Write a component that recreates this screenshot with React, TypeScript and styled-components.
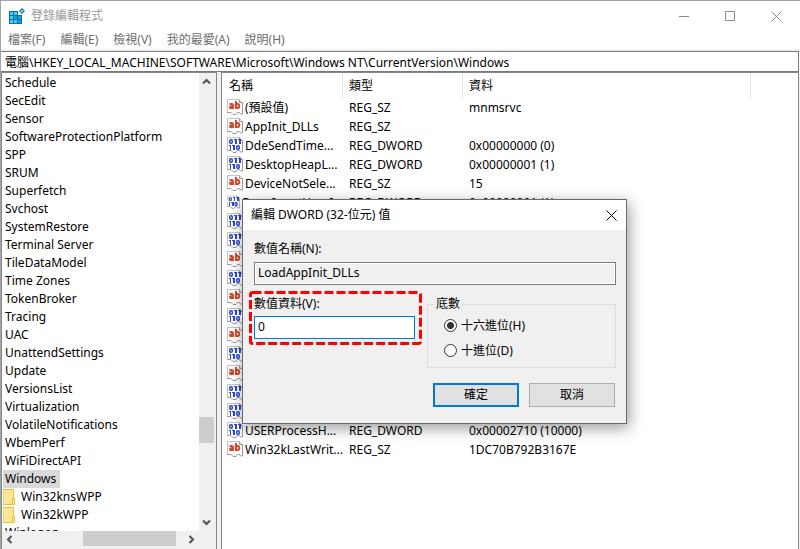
import React from "react";
import styled, { createGlobalStyle, css } from "styled-components";

const Global = createGlobalStyle`
  * { box-sizing: border-box; }
  html, body, #root { height: 100%; }
  body { margin: 0; overflow: hidden; background: #fff; }
  body, button, input, table {
    font-family: "Noto Sans", "Noto Sans CJK TC", sans-serif;
    font-size: 12px;
    line-height: 18px;
    color: #000;
  }
  button, input { padding: 0; margin: 0; }
`;

const Window = styled.div`
  position: relative;
  height: 100vh;
  display: flex;
  flex-direction: column;
  overflow: hidden;
  background: #fff;
  border-top: 1px solid #a4a4a4;
  border-left: 1px solid #a4a4a4;
`;

const TitleBar = styled.header`
  display: flex;
  align-items: center;
  flex: none;
  height: 30px;
  padding: 0 1px 0 8px;
  color: #999;
`;

const Title = styled.h1`
  flex: 1;
  margin: 0 0 0 5px;
  font-size: 12px;
  font-weight: 400;
`;

const WindowButton = styled.button`
  display: flex;
  align-items: center;
  justify-content: center;
  width: 46px;
  height: 28px;
  border: 0;
  background: none;
  color: #8c8c8c;
`;

const MenuBar = styled.nav`
  display: flex;
  flex: none;
  height: 20px;
  padding: 0 7px;
  gap: 15px;
  border-bottom: 2px solid #f0f0f0;
`;

const MenuItem = styled.button`
  border: 0;
  background: none;
  color: #6d6d6d;
`;

const Address = styled.input`
  flex: none;
  width: calc(100% - 1px);
  height: 21px;
  padding: 0 4px;
  border: 1px solid #7a7a7a;
  border-left: 0;
  outline: 0;
`;

const Panes = styled.main`
  display: flex;
  flex: 1;
  min-height: 0;
  background: #f0f0f0;
`;

const TreePane = styled.section`
  display: grid;
  grid-template: minmax(0, 1fr) 18px / minmax(0, 1fr) 17px;
  flex: none;
  width: 216px;
  border: 1px solid #828790;
  border-bottom: 0;
  background: #fff;
`;

const Tree = styled.ul`
  margin: 0;
  padding: 1px 0 0 1px;
  list-style: none;
  overflow: hidden;
`;

const TreeRow = styled.li`
  display: flex;
  align-items: center;
  height: 18px;
`;

const TreeLabel = styled.span<{ $selected?: boolean }>`
  padding: 0 4px 0 2px;
  white-space: nowrap;
  background: ${(p) => (p.$selected ? "#d9d9d9" : "none")};
`;

const Folder = styled.svg`
  margin-right: 4px;
`;

const ScrollBar = styled.div<{ $horizontal?: boolean }>`
  display: flex;
  flex-direction: ${(p) => (p.$horizontal ? "row" : "column")};
  background: #f0f0f0;
`;

const ScrollButton = styled.button`
  display: flex;
  align-items: center;
  justify-content: center;
  flex: none;
  width: 15px;
  height: 17px;
  border: 0;
  background: none;
`;

const Track = styled.div<{ $before: number; $thumb: number; $after: number; $horizontal?: boolean }>`
  flex: 1;
  display: grid;
  ${(p) => {
    const tracks = `${p.$before}fr ${p.$thumb}fr ${p.$after}fr`;
    return p.$horizontal
      ? css`grid-template-columns: ${tracks};`
      : css`grid-template-rows: ${tracks};`;
  }}
`;

const Thumb = styled.div<{ $horizontal?: boolean }>`
  background: #cdcdcd;
  ${(p) => (p.$horizontal ? "grid-column: 2; height: 15px;" : "grid-row: 2; width: 15px;")}
`;

const ListPane = styled.section`
  flex: 1;
  min-width: 0;
  margin-left: 4px;
  border: 1px solid #828790;
  border-bottom: 0;
  margin-right: 1px;
  background: #fff;
  overflow: hidden;
`;

const Values = styled.table`
  width: 100%;
  table-layout: fixed;
  border-collapse: separate;
  border-spacing: 0;
`;

const HeadCell = styled.th<{ $width?: number }>`
  height: 25px;
  width: ${(p) => (p.$width ? `${p.$width}px` : "auto")};
  padding: 1px 0 0 6px;
  text-align: left;
  font-weight: 400;
  background: linear-gradient(#e5e5e5, #e5e5e5) right top / ${(p) => (p.$width ? 1 : 0)}px 25px no-repeat;
  &:first-child { padding-left: 7px; }
`;

const Cell = styled.td`
  height: 19px;
  padding: 0 0 0 6px;
  white-space: nowrap;
`;

const NameCell = styled(Cell)`
  padding-left: 5px;
`;

const NameContent = styled.div`
  display: flex;
  align-items: center;
  gap: 2px;
  height: 19px;
`;

const Dialog = styled.section`
  position: absolute;
  left: 241px;
  top: 198px;
  width: 385px;
  background: #f0f0f0;
  border: 1px solid #6a6a6a;
  box-shadow: 2px 4px 14px rgba(0, 0, 0, 0.4);
`;

const DialogBar = styled.header`
  display: flex;
  align-items: center;
  justify-content: space-between;
  height: 30px;
  padding-left: 8px;
  background: #fff;
`;

const DialogTitle = styled.h2`
  margin: 0;
  font-size: 12px;
  font-weight: 400;
`;

const CloseButton = styled(WindowButton)`
  width: 30px;
  color: #000;
`;

const DialogBody = styled.form`
  padding: 10px 10px 16px 11px;
`;

const Label = styled.label`
  display: block;
`;

const NameInput = styled.input`
  display: block;
  width: 100%;
  height: 23px;
  margin: 4px 0 7px;
  padding: 0 3px 2px;
  border: 1px solid #7a7a7a;
  background: #f0f0f0;
  outline: 1px solid #fff;
  outline-offset: -2px;
`;

const Columns = styled.div`
  display: grid;
  grid-template-columns: minmax(0, 1fr) 189px;
  gap: 12px;
`;

const DataField = styled.div`
  position: relative;
  padding-top: 3px;
`;

const DataInput = styled.input`
  display: block;
  width: 100%;
  height: 23px;
  margin-top: 3px;
  padding: 0 3px 2px;
  border: 1px solid #0078d7;
  background: #fff;
  outline: 0;
`;

const Highlight = styled.svg`
  position: absolute;
  left: -6px;
  top: -2px;
  width: 175px;
  height: 56px;
  pointer-events: none;
`;

const Base = styled.fieldset`
  height: 73px;
  margin: 3px 0 0;
  padding: 0 0 0 16px;
  border: 1px solid #dcdcdc;
`;

const Legend = styled.legend`
  margin-left: -10px;
  padding: 0 2px;
`;

const Option = styled.label`
  display: flex;
  align-items: center;
  gap: 4px;
  height: 25px;
`;

const Radio = styled.input`
  appearance: none;
  width: 13px;
  height: 13px;
  border: 1px solid #333;
  border-radius: 50%;
  background: #fff;
  &:checked {
    background: radial-gradient(circle, #333 0 3px, #fff 4px);
  }
`;

const Actions = styled.div`
  display: flex;
  justify-content: flex-end;
  gap: 10px;
  margin-top: 15px;
  padding-right: 1px;
`;

const Action = styled.button<{ $primary?: boolean }>`
  width: 86px;
  height: 24px;
  border: ${(p) => (p.$primary ? "2px solid #0078d7" : "1px solid #adadad")};
  background: #e1e1e1;
`;

const AppIcon = () => (
  <svg width="17" height="16" viewBox="0 0 17 16" aria-hidden="true">
    <path d="M0 3h9v4h4v9H0z" fill="#0b72a3" />
    <path d="M1 4h3v3H1zM5 4h3v3H5zM1 8h3v3H1zM5 12h3v3H5zM1 12h3v3H1z" fill="#45cdfa" />
    <path d="M5 8h3v3H5zM9 8h3v3H9zM9 12h3v3H9z" fill="#149fe0" />
    <path d="M13 0l3 3-3 3-3-3z" fill="#0b7db0" />
    <path d="M13 1.500l1.500 1.500-1.500 1.500-1.500-1.500z" fill="#7fdcff" />
  </svg>
);

const Page = () => (
  <>
    <path d="M.5 14V.5H12.500L15.500 3.500V14" fill="#fff" stroke="#c4c4c4" />
    <path d="M.5 13.500H4l2 2h3l1.500-2h2l1 1.500h2V3.500h-3V.5" fill="none" stroke="#999" />
  </>
);

const StringIcon = () => (
  <svg width="16" height="17" viewBox="0 0 16 17" aria-hidden="true">
    <Page />
    <g fill="none" stroke="#d6492a" strokeWidth="2">
      <path d="M2.500 5h2q1.500 0 1.500 1.400V10M6 7.300H4.200Q3 7.300 3 8.300T4.200 9.200Q5.500 9.200 6 8.500" />
      <path d="M9 2v8M9 6q.6-.9 1.600-.9 1.700 0 1.700 2t-1.700 2q-1 0-1.600-.8" />
    </g>
  </svg>
);

const BinaryIcon = () => (
  <svg width="16" height="17" viewBox="0 0 16 17" aria-hidden="true">
    <Page />
    <g fill="none" stroke="#2a48d0" strokeWidth="1.500">
      <rect x="2.750" y="2.750" width="2.500" height="3.500" rx="1" />
      <rect x="9.750" y="8.750" width="2.500" height="3.500" rx="1" />
    </g>
    <g fill="#2a48d0" shapeRendering="crispEdges">
      <path d="M7 2h3v5H8V3H7zM11 2h3v5h-2V3h-1z" />
      <path d="M2 8h2v5H3V9H2zM3 9h1v4H3zM5 8h3v5H6V9H5z" />
    </g>
  </svg>
);

const Cross = () => (
  <svg width="11" height="11" viewBox="0 0 11 11" aria-hidden="true">
    <path d="M.5.5l10 10M10.500.5l-10 10" stroke="currentColor" />
  </svg>
);

const arrows = {
  up: "M1 6.500L4.500 3 8 6.500",
  down: "M1 2.500L4.500 6 8 2.500",
  left: "M6.500 1L3 4.500 6.500 8",
  right: "M2.500 1L6 4.500 2.500 8",
};

const Arrow = ({ to }: { to: keyof typeof arrows }) => (
  <svg width="9" height="9" viewBox="0 0 9 9" aria-hidden="true">
    <path d={arrows[to]} fill="none" stroke="#505050" strokeWidth="2" />
  </svg>
);

const keys = [
  "Schedule", "SecEdit", "Sensor", "SoftwareProtectionPlatform", "SPP", "SRUM", "Superfetch",
  "Svchost", "SystemRestore", "Terminal Server", "TileDataModel", "Time Zones", "TokenBroker",
  "Tracing", "UAC", "UnattendSettings", "Update", "VersionsList", "Virtualization",
  "VolatileNotifications", "WbemPerf", "WiFiDirectAPI", "Windows",
];

type Value = { kind: "SZ" | "DWORD"; name?: string; data?: string };

const values: Value[] = [
  { kind: "SZ", name: "(預設值)", data: "mnmsrvc" },
  { kind: "SZ", name: "AppInit_DLLs" },
  { kind: "DWORD", name: "DdeSendTime...", data: "0x00000000 (0)" },
  { kind: "DWORD", name: "DesktopHeapL...", data: "0x00000001 (1)" },
  { kind: "SZ", name: "DeviceNotSele...", data: "15" },
  { kind: "DWORD", name: "DwmInputUsesI...", data: "0x00000001 (1)" },
  { kind: "DWORD" },
  { kind: "DWORD" },
  { kind: "SZ" },
  { kind: "DWORD" },
  { kind: "SZ" },
  { kind: "DWORD" },
  { kind: "SZ" },
  { kind: "DWORD" },
  { kind: "SZ" },
  { kind: "DWORD" },
  { kind: "DWORD" },
  { kind: "DWORD", name: "USERProcessH...", data: "0x00002710 (10000)" },
  { kind: "SZ", name: "Win32kLastWrit...", data: "1DC70B792B3167E" },
];

export default function App() {
  return (
    <Window>
      <Global />
      <TitleBar>
        <AppIcon />
        <Title>登錄編輯程式</Title>
        <WindowButton aria-label="最小化">
          <svg width="10" height="10" viewBox="0 0 10 10"><path d="M0 5.500h10" stroke="currentColor" /></svg>
        </WindowButton>
        <WindowButton aria-label="最大化">
          <svg width="10" height="10" viewBox="0 0 10 10"><path d="M.5.5h9v9h-9z" fill="none" stroke="currentColor" /></svg>
        </WindowButton>
        <WindowButton aria-label="關閉"><Cross /></WindowButton>
      </TitleBar>
      <MenuBar>
        {["檔案(F)", "編輯(E)", "檢視(V)", "我的最愛(A)", "說明(H)"].map((m) => <MenuItem key={m}>{m}</MenuItem>)}
      </MenuBar>
      <Address
        aria-label="路徑"
        defaultValue={"電腦\\HKEY_LOCAL_MACHINE\\SOFTWARE\\Microsoft\\Windows NT\\CurrentVersion\\Windows"}
      />
      <Panes>
        <TreePane>
          <Tree>
            {keys.map((k) => (
              <TreeRow key={k}><TreeLabel $selected={k === "Windows"}>{k}</TreeLabel></TreeRow>
            ))}
            {["Win32knsWPP", "Win32kWPP"].map((k) => (
              <TreeRow key={k}>
                <Folder width="12" height="17" viewBox="0 0 12 17" aria-hidden="true">
                  <path d="M0 .5h10.500v8.500h1v6.500H0z" fill="#ffe594" stroke="#e8bf3c" />
                  <path d="M9.500 15V9.500h1.500" fill="none" stroke="#e8bf3c" />
                </Folder>
                <TreeLabel>{k}</TreeLabel>
              </TreeRow>
            ))}
            <TreeRow><TreeLabel>Winlogon</TreeLabel></TreeRow>
          </Tree>
          <ScrollBar>
            <ScrollButton aria-label="向上捲動"><Arrow to="up" /></ScrollButton>
            <Track $before={326} $thumb={26} $after={71}><Thumb /></Track>
            <ScrollButton aria-label="向下捲動"><Arrow to="down" /></ScrollButton>
          </ScrollBar>
          <ScrollBar $horizontal>
            <ScrollButton aria-label="向左捲動"><Arrow to="left" /></ScrollButton>
            <Track $horizontal $before={66} $thumb={93} $after={8}><Thumb $horizontal /></Track>
            <ScrollButton aria-label="向右捲動"><Arrow to="right" /></ScrollButton>
          </ScrollBar>
          <ScrollBar />
        </TreePane>
        <ListPane>
          <Values>
            <thead>
              <tr>
                <HeadCell $width={121}>名稱</HeadCell>
                <HeadCell $width={120}>類型</HeadCell>
                <HeadCell $width={288}>資料</HeadCell>
                <HeadCell as="td" />
              </tr>
            </thead>
            <tbody>
              {values.map((v, i) => (
                <tr key={i}>
                  <NameCell>
                    <NameContent>{v.kind === "SZ" ? <StringIcon /> : <BinaryIcon />}{v.name}</NameContent>
                  </NameCell>
                  <Cell>{v.name && `REG_${v.kind}`}</Cell>
                  <Cell>{v.data}</Cell>
                  <Cell />
                </tr>
              ))}
            </tbody>
          </Values>
        </ListPane>
      </Panes>
      <Dialog role="dialog" aria-labelledby="dialog-title">
        <DialogBar>
          <DialogTitle id="dialog-title">編輯 DWORD (32-位元) 值</DialogTitle>
          <CloseButton aria-label="關閉"><Cross /></CloseButton>
        </DialogBar>
        <DialogBody onSubmit={(e: React.FormEvent) => e.preventDefault()}>
          <Label htmlFor="value-name">數值名稱(N):</Label>
          <NameInput id="value-name" readOnly value="LoadAppInit_DLLs" />
          <Columns>
            <DataField>
              <Label htmlFor="value-data">數值資料(V):</Label>
              <DataInput id="value-data" defaultValue="0" />
              <Highlight aria-hidden="true">
                <rect x="2.500" y="2.500" width="170" height="51" rx="2" fill="none" stroke="#f00" strokeWidth="3" strokeDasharray="9 3" />
              </Highlight>
            </DataField>
            <Base>
              <Legend>底數</Legend>
              <Option><Radio type="radio" name="base" defaultChecked />十六進位(H)</Option>
              <Option><Radio type="radio" name="base" />十進位(D)</Option>
            </Base>
          </Columns>
          <Actions>
            <Action type="submit" $primary>確定</Action>
            <Action type="button">取消</Action>
          </Actions>
        </DialogBody>
      </Dialog>
    </Window>
  );
}
